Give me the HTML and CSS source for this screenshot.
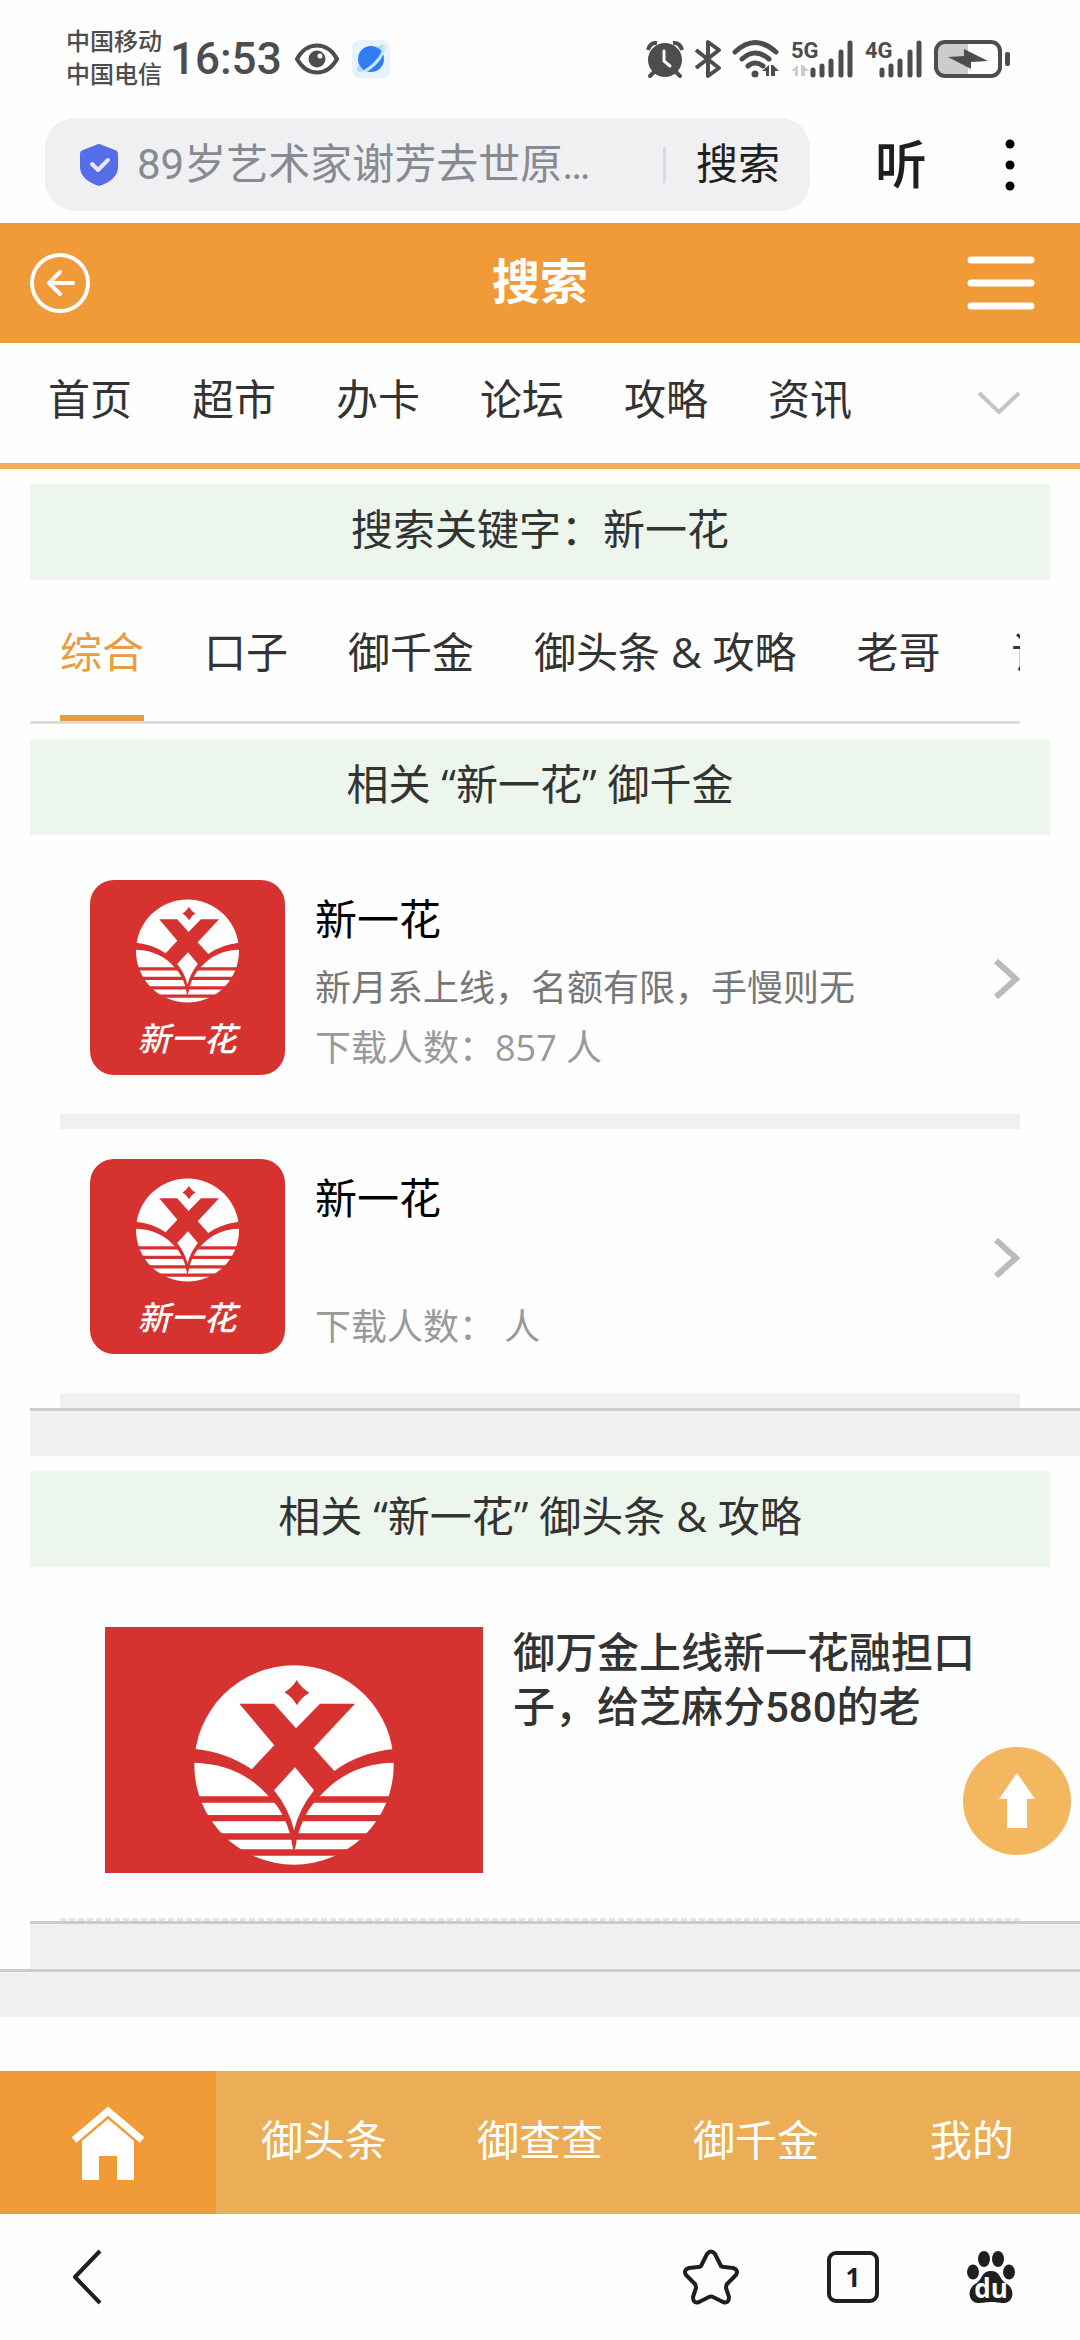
FILE: index.html
```html
<!doctype html>
<html lang="zh-CN">

<head>
    <meta charset="utf-8">
    <meta name="viewport" content="width=device-width, initial-scale=1">
    <title>搜索</title>
    <link rel="stylesheet" href="styles.css">
</head>

<body>
    <svg class="defs" width="0" height="0" aria-hidden="true">
        <symbol id="emblem" viewBox="343 224 598 600">
            <circle cx="642" cy="524" r="299" fill="#fff"/>
            <path fill="#d63230" d="M340 618H945V637H340ZM340 674H945V693H340ZM340 729H945V748H340ZM340 777H945V796H340Z"/>
            <path fill="#d63230" d="M478 340H582L648 414 720 340H825L701 473 763 542Q840 486 945 476V517Q810 517 720 617Q660 675 645 777H639Q625 675 565 617Q480 520 339 517V476Q435 483 515 537L583 465Z"/>
            <path fill="#d63230" d="M650 269Q664 293 688 307Q664 320 651 345Q637 320 613 306Q637 292 650 269Z"/>
            <path fill="#fff" d="M645 531L702 600Q658 655 642 720Q627 655 582 600Z"/>
        </symbol>
        <symbol id="bars" viewBox="0 0 44 38">
            <path stroke="currentColor" stroke-width="5" stroke-linecap="round" d="M3 30v5M12 26v9M21 21v14M31 12v23M40 3v32"/>
        </symbol>
        <symbol id="arrow" viewBox="0 0 27 44">
            <path fill="none" stroke="#bbb" stroke-width="6" d="M3 4L23 22L3 40"/>
        </symbol>
    </svg>

    <div class="status">
        <div class="carrier">
            <span>中国移动</span>
            <span>中国电信</span>
        </div>
        <span class="time">16:53</span>
        <svg class="eye" width="46" height="32" viewBox="0 0 46 32">
            <path fill="none" stroke="currentColor" stroke-width="4" d="M3 16C13-2 33-2 43 16C33 34 13 34 3 16Z"/>
            <circle cx="23" cy="16" r="8.500" fill="currentColor"/>
            <circle cx="26" cy="13" r="2.500" fill="#fff"/>
        </svg>
        <svg width="38" height="38" viewBox="0 0 38 38">
            <rect width="38" height="38" rx="8" fill="#e6f2fc"/>
            <path fill="#b3dafb" d="M24 8C34 0 36 8 27 18S6 36 5 30C4 28 7 25 9 22Z"/>
            <circle cx="19" cy="19" r="13" fill="#2f7df2"/>
            <path fill="none" stroke="#c8e4fd" stroke-width="3" d="M31 6C33 13 25 24 13 31"/>
        </svg>
        <div class="status-right">
            <svg width="38" height="38" viewBox="0 0 38 38">
                <circle cx="19" cy="20" r="17" fill="currentColor"/>
                <path stroke="currentColor" stroke-width="4" stroke-linecap="round" d="M8 32L4 36M30 32L34 36"/>
                <path fill="none" stroke="currentColor" stroke-width="4" d="M2 10Q4 2 11 3M36 10Q34 2 27 3"/>
                <path fill="none" stroke="#fff" stroke-width="3" stroke-linecap="round" d="M18 11v10l6 5"/>
            </svg>
            <svg width="26" height="38" viewBox="0 0 26 38">
                <path fill="none" stroke="currentColor" stroke-width="4" stroke-linejoin="round" d="M1 10L24 28L13 36V2L24 10L1 28"/>
            </svg>
            <svg width="48" height="38" viewBox="0 0 48 38">
                <path fill="none" stroke="currentColor" stroke-width="5" stroke-linecap="round" d="M3 12Q23-7 44 12M10 19Q23 7 37 19M16 26Q23 20 31 26"/>
                <circle cx="23" cy="34" r="3.500" fill="currentColor"/>
                <path fill="currentColor" d="M30 31L37 25V36H34V31ZM39 25H41L47 31H43V36H39Z"/>
            </svg>
            <svg width="63" height="38" viewBox="0 0 63 38">
                <text class="net" x="0" y="18">5G</text>
                <path fill="#ccc" d="M0 31L7 25V36H4V31ZM10 25H12L18 31H14V36H10Z"/>
                <use href="#bars" x="19" y="0" width="44" height="38"/>
            </svg>
            <svg width="58" height="38" viewBox="0 0 58 38">
                <text class="net" x="0" y="18">4G</text>
                <use href="#bars" x="14" y="0" width="44" height="38"/>
            </svg>
            <svg width="76" height="38" viewBox="0 0 76 38">
                <path fill="#ccc" d="M10 3H34V35H10Q3 34 3 28V10Q3 4 10 3Z"/>
                <rect x="2" y="2" width="64" height="34" rx="9" fill="none" stroke="currentColor" stroke-width="4"/>
                <rect x="71" y="12" width="5" height="14" rx="2" fill="currentColor"/>
                <path fill="currentColor" d="M14 17L30 16V9L54 21L37 22V29Z"/>
            </svg>
        </div>
    </div>

    <form class="address">
        <div class="search-box">
            <svg width="40" height="44" viewBox="0 0 40 44">
                <path fill="#566dea" d="M17 2Q20 0 23 2L36 7Q39 8 39 11V25Q38 37 20 43Q2 37 1 25V11Q1 8 4 7Z"/>
                <path fill="none" stroke="#e6e9fb" stroke-width="4" stroke-linecap="round" stroke-linejoin="round" d="M13 21L19 27L29 17"/>
            </svg>
            <input type="text" aria-label="搜索内容" placeholder="89岁艺术家谢芳去世原…">
            <button type="button" class="go">搜索</button>
        </div>
        <button type="button" class="listen">听</button>
        <button type="button" class="more" aria-label="更多">
            <svg width="10" height="52" viewBox="0 0 10 52">
                <circle cx="5" cy="5" r="4.500"/><circle cx="5" cy="26" r="4.500"/><circle cx="5" cy="47" r="4.500"/>
            </svg>
        </button>
    </form>

    <header class="header">
        <a href="#" aria-label="返回">
            <svg width="60" height="60" viewBox="0 0 60 60">
                <circle cx="30" cy="30" r="28" fill="none" stroke="#fff" stroke-width="4"/>
                <path fill="none" stroke="#fff" stroke-width="4" stroke-linecap="round" stroke-linejoin="round" d="M43 30H19M30 19L19 30L30 41"/>
            </svg>
        </a>
        <h1>搜索</h1>
        <button type="button" class="menu" aria-label="菜单">
            <svg width="68" height="54" viewBox="0 0 68 54">
                <path stroke="#fff" stroke-width="7" stroke-linecap="round" d="M4 4H64M4 27H64M4 50H64"/>
            </svg>
        </button>
    </header>

    <nav class="nav">
        <a href="#">首页</a>
        <a href="#">超市</a>
        <a href="#">办卡</a>
        <a href="#">论坛</a>
        <a href="#">攻略</a>
        <a href="#">资讯</a>
        <button type="button" class="nav-more" aria-label="展开">
            <svg width="42" height="24" viewBox="0 0 42 24">
                <path fill="none" stroke="#c4c4c4" stroke-width="4" d="M1 2L21 21L41 2"/>
            </svg>
        </button>
    </nav>

    <main class="content">
        <h2 class="band">搜索关键字：新一花</h2>

        <div class="tabs">
            <a href="#" class="active">综合</a>
            <a href="#">口子</a>
            <a href="#">御千金</a>
            <a href="#">御头条 &amp; 攻略</a>
            <a href="#">老哥</a>
            <a href="#">&nbsp;论坛</a>
        </div>

        <h2 class="band">相关 “新一花” 御千金</h2>
        <div class="app-list">
            <a href="#" class="app">
                <svg class="app-logo" width="195" height="195" viewBox="0 0 195 195">
                    <use href="#emblem" x="46" y="19" width="103" height="104"/>
                    <text class="logo-text" x="97" y="171" text-anchor="middle">新一花</text>
                </svg>
                <div class="app-info">
                    <h3>新一花</h3>
                    <p class="desc">新月系上线，名额有限，手慢则无</p>
                    <p class="count">下载人数：857 人</p>
                </div>
                <svg width="27" height="44"><use href="#arrow"/></svg>
            </a>
            <a href="#" class="app">
                <svg class="app-logo" width="195" height="195" viewBox="0 0 195 195">
                    <use href="#emblem" x="46" y="19" width="103" height="104"/>
                    <text class="logo-text" x="97" y="171" text-anchor="middle">新一花</text>
                </svg>
                <div class="app-info">
                    <h3>新一花</h3>
                    <p class="desc"></p>
                    <p class="count">下载人数： 人</p>
                </div>
                <svg width="27" height="44"><use href="#arrow"/></svg>
            </a>
        </div>
        <div class="gap"></div>

        <h2 class="band">相关 “新一花” 御头条 &amp; 攻略</h2>
        <div class="news-list">
            <a href="#" class="news">
                <svg width="378" height="246" viewBox="0 0 378 246">
                    <rect width="378" height="246" fill="#d63230"/>
                    <use href="#emblem" x="89" y="38" width="200" height="200"/>
                </svg>
                <h3>御万金上线新一花融担口子，给芝麻分580的老</h3>
            </a>
        </div>
        <div class="gap"></div>
    </main>
    <div class="gap"></div>

    <nav class="footer">
        <a href="#" class="home" aria-label="首页">
            <svg width="72" height="74" viewBox="0 0 72 74">
                <path fill="none" stroke="#fff" stroke-width="7" d="M2 34L36 5L70 34"/>
                <path fill="#fff" d="M36 13L62 35V74H45V50H27V74H10V35Z"/>
            </svg>
        </a>
        <a href="#">御头条</a>
        <a href="#">御查查</a>
        <a href="#">御千金</a>
        <a href="#">我的</a>
    </nav>

    <div class="toolbar">
        <button type="button" class="tool-back" aria-label="后退">
            <svg width="30" height="56" viewBox="0 0 30 56">
                <path fill="none" stroke="#1f1f1f" stroke-width="4" stroke-linejoin="round" d="M28 2L3 28L28 54"/>
            </svg>
        </button>
        <button type="button" aria-label="收藏">
            <svg width="56" height="56" viewBox="0 0 56 56">
                <path fill="none" stroke="#1f1f1f" stroke-width="4" stroke-linejoin="round" d="M24 5Q28 0 32 5L38 17Q39 18 41 18L50 19Q56 21 53 26L44 35Q43 37 43 39L46 48Q46 55 40 53L30 48Q28 47 26 48L16 53Q10 55 10 48L13 39Q13 37 12 35L3 26Q0 21 6 19L15 18Q17 18 18 17Z"/>
            </svg>
        </button>
        <button type="button" class="pages" aria-label="窗口">1</button>
        <button type="button" aria-label="百度">
            <svg width="48" height="52" viewBox="0 0 48 52" fill="#1f1f1f">
                <ellipse cx="6" cy="21" rx="6" ry="7.500"/>
                <ellipse cx="17" cy="8" rx="6" ry="8"/>
                <ellipse cx="31" cy="8" rx="6" ry="8"/>
                <ellipse cx="42" cy="21" rx="6" ry="7.500"/>
                <path d="M24 20C34 20 32 29 40 33C49 39 46 52 37 52C31 52 29 51 24 51S17 52 11 52C2 52-1 39 8 33C16 29 14 20 24 20Z"/>
                <text class="du" x="24" y="47" text-anchor="middle">du</text>
            </svg>
        </button>
    </div>

    <a href="#" class="to-top" aria-label="回到顶部">
        <svg width="36" height="56" viewBox="0 0 36 56">
            <path fill="#fff" d="M18 0L36 26H28V55H8V26H0Z"/>
        </svg>
    </a>
</body>

</html>
```

FILE: styles.css
```css
* {
    box-sizing: border-box;
}

body {
    display: flex;
    flex-direction: column;
    min-height: 100vh;
    margin: 0;
    background-color: #fefefe;
    color: #333;
    font-family: "Open Sans", "Noto Sans CJK SC", sans-serif;
    font-size: 42px;
}

h1, h2, h3, p {
    margin: 0;
    font-weight: normal;
}

a {
    color: inherit;
    text-decoration: none;
}

button {
    padding: 0;
    border: none;
    background: none;
    color: #1f1f1f;
    font: inherit;
}

svg {
    display: block;
    flex: none;
    overflow: visible;
}

.defs {
    position: absolute;
}

/* status bar */
.status {
    display: flex;
    align-items: center;
    height: 118px;
    padding: 0 70px 0 66px;
    color: #4d4d4d;
    font-family: Roboto, "Noto Sans CJK SC", sans-serif;
}

.carrier {
    display: flex;
    flex-direction: column;
    font-size: 24px;
    font-weight: 500;
    line-height: 33px;
}

.time {
    margin-left: 8px;
    font-size: 44px;
    font-weight: 500;
}

.eye {
    margin: 0 12px;
}

.status-right {
    display: flex;
    align-items: center;
    gap: 11px;
    margin-left: auto;
}

.net {
    fill: currentColor;
    font-size: 22px;
    font-weight: bold;
}

/* address row */
.address {
    display: flex;
    align-items: center;
    height: 105px;
    padding: 0 65px 12px 45px;
    font-family: Roboto, "Noto Sans CJK SC", sans-serif;
}

.search-box {
    display: flex;
    flex: 1;
    align-items: center;
    height: 93px;
    padding: 0 30px 0 34px;
    border-radius: 30px;
    background-color: #f0f0f3;
}

.search-box input {
    flex: 1;
    min-width: 0;
    margin-left: 18px;
    padding: 0;
    border: none;
    outline: none;
    background: none;
    font: inherit;
}

.search-box input::placeholder {
    color: #868a93;
    opacity: 1;
}

.go {
    position: relative;
    padding-left: 33px;
    line-height: 60px;
}

.go::before {
    content: "";
    position: absolute;
    left: 0;
    top: 50%;
    width: 3px;
    height: 36px;
    margin-top: -18px;
    background-color: #d9d9df;
}

.listen {
    margin-left: 65px;
    padding-top: 4px;
    font-size: 52px;
    font-weight: 500;
    line-height: 60px;
}

.more {
    margin-left: 78px;
}

/* page header */
.header {
    display: grid;
    grid-template-columns: 1fr auto 1fr;
    align-items: center;
    height: 120px;
    padding: 0 45px 0 30px;
    background-color: #f09b38;
    color: #fff;
}

.header h1 {
    padding: 0 0 4px 15px;
    font-size: 48px;
    font-weight: bold;
    line-height: 60px;
}

.menu {
    justify-self: end;
}

.nav {
    display: flex;
    align-items: center;
    gap: 60px;
    height: 126px;
    padding: 0 60px 0 48px;
    border-bottom: 6px solid #eeae55;
    line-height: 60px;
}

.nav a {
    padding-bottom: 9px;
}

.nav-more {
    margin-left: auto;
}

/* search result */
.content {
    padding-left: 30px;
}

.band {
    height: 96px;
    margin: 15px 30px 0 0;
    background-color: #ecf6ed;
    font-size: 42px;
    line-height: 90px;
    text-align: center;
}

.tabs {
    display: flex;
    gap: 60px;
    margin-right: 60px;
    padding-left: 30px;
    overflow: hidden;
    border-bottom: 3px solid #dcdcdc;
    white-space: nowrap;
}

.tabs a {
    flex: none;
    height: 141px;
    line-height: 144px;
}

.tabs .active {
    border-bottom: 6px solid #e99d42;
    color: #e99d42;
}

.app-list {
    margin: 0 60px 0 30px;
    padding-top: 15px;
}

.app {
    display: flex;
    align-items: center;
    padding: 30px 0 36px 30px;
    border-bottom: 15px solid #f0f0f0;
}

.app-logo {
    align-self: flex-start;
    border-radius: 24px;
    background-color: #d63230;
}

.logo-text {
    fill: #fff;
    font-size: 33px;
    font-weight: 500;
    font-style: italic;
}

.app-info {
    flex: 1;
    margin-left: 30px;
}

.app-info h3 {
    color: #000;
    font-size: 42px;
    line-height: 78px;
}

.app-info p {
    height: 60px;
    font-size: 36px;
    line-height: 60px;
}

.desc {
    color: #777;
}

.count {
    color: #999;
}

.gap {
    height: 48px;
    border-top: 3px solid #ccc;
    background-color: #f0f0f0;
}

.news-list {
    margin: 0 60px 0 30px;
}

.news {
    display: flex;
    gap: 30px;
    padding: 60px 45px 45px;
    border-bottom: 3px dashed #e5e5e5;
}

.news h3 {
    font-family: Roboto, "Noto Sans CJK SC", sans-serif;
    font-size: 42px;
    font-weight: 500;
    line-height: 54px;
}

/* bottom tabs */
.footer {
    display: flex;
    height: 143px;
    margin-top: auto;
    background-color: #ebae56;
    color: #fff;
    line-height: 60px;
}

.footer a {
    display: flex;
    flex: 1;
    align-items: center;
    justify-content: center;
    padding-bottom: 6px;
}

.footer .home {
    padding-bottom: 0;
    background-color: #f09b38;
}

.toolbar {
    display: flex;
    align-items: center;
    gap: 88px;
    height: 126px;
    padding: 0 65px 0 72px;
}

.tool-back {
    margin-right: auto;
}

.pages {
    width: 52px;
    height: 52px;
    border: 4px solid #1f1f1f;
    border-radius: 9px;
    font-size: 26px;
    font-weight: bold;
    line-height: 44px;
}

.du {
    fill: #fff;
    font-size: 26px;
    font-weight: bold;
}

.to-top {
    position: fixed;
    right: 9px;
    bottom: 485px;
    display: flex;
    align-items: center;
    justify-content: center;
    width: 108px;
    height: 108px;
    border-radius: 50%;
    background-color: #f2b75f;
}
```
